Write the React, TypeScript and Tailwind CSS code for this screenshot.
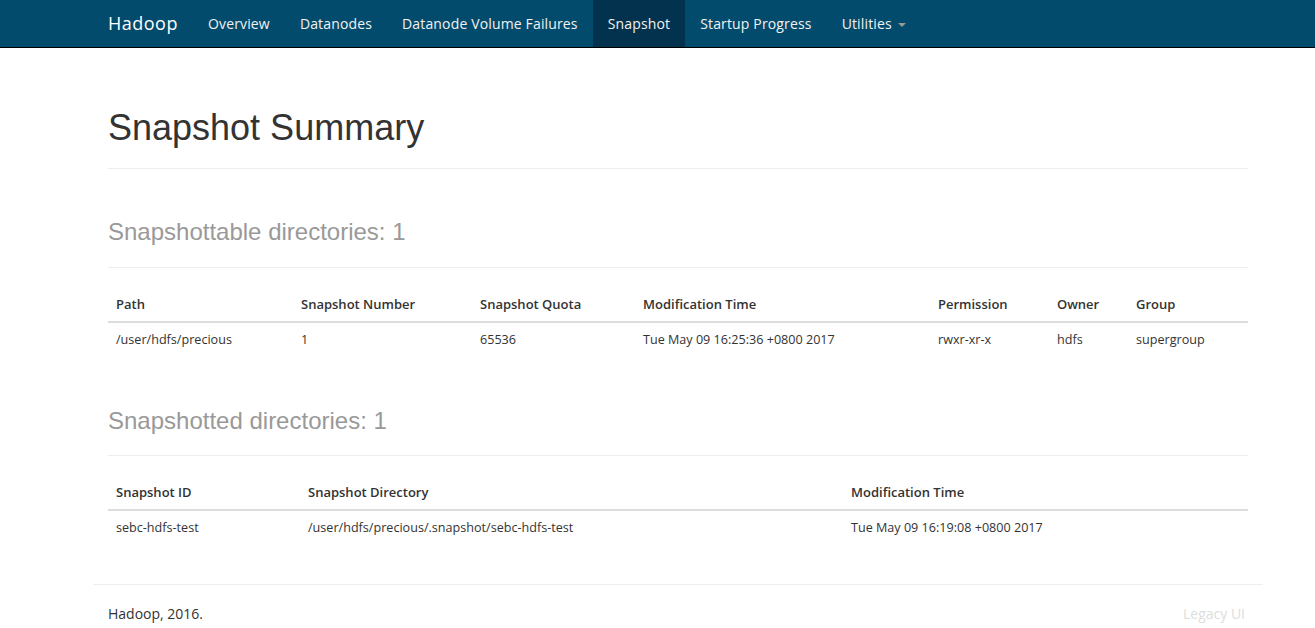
import { Fragment } from 'react'

const sans = "font-['Open_Sans',sans-serif]"
const head = "font-['Liberation_Sans',Arial,sans-serif]"

const navItems = ['Overview', 'Datanodes', 'Datanode Volume Failures', 'Snapshot', 'Startup Progress']

function Navbar() {
  return (
    <div className={`h-[48px] bg-[#034b6d] border-b border-black ${sans}`}>
      <div className="w-[1170px] ml-[93px] flex h-full">
        <div className="px-[15px] flex items-center text-[18px] text-white tracking-[0.5px]">Hadoop</div>
        {navItems.map((n) => (
          <div key={n}
            className={`px-[15px] flex items-center text-[14px] tracking-[0.15px] text-[#f2f2f2] ${n === 'Snapshot' ? 'bg-[#02324d]' : ''}`}>
            {n}
          </div>
        ))}
        <div className="px-[15px] flex items-center text-[14px] tracking-[0.15px] text-[#f2f2f2] gap-[6px]">
          Utilities
          <span className="w-0 h-0 border-x-[4px] border-x-transparent border-t-[4px] border-t-[#999] mt-[2px]" />
        </div>
      </div>
    </div>
  )
}

type Col = { label: string; w: string }

function DataTable({ cols, rows }: { cols: Col[]; rows: string[][] }) {
  return (
    <table className={`w-full border-collapse table-fixed text-[12.6px] text-[#333] ${sans}`}>
      <colgroup>
        {cols.map((c) => <col key={c.label} className={c.w} />)}
      </colgroup>
      <thead>
        <tr className="border-b-2 border-[#ddd]">
          {cols.map((c) => (
            <th key={c.label} className="text-left font-semibold text-[13px] px-[8px] pt-[8px] pb-[7px] leading-[19px]">{c.label}</th>
          ))}
        </tr>
      </thead>
      <tbody>
        {rows.map((r, i) => (
          <tr key={i}>
            {r.map((v, j) => (
              <td key={j} className="px-[8px] pt-[7px] pb-[9px] leading-[19px] whitespace-nowrap">{v}</td>
            ))}
          </tr>
        ))}
      </tbody>
    </table>
  )
}

export default function App() {
  return (
    <div className="bg-white min-h-[628px]">
      <Navbar />
      <div className="w-[1140px] ml-[108px]">
        <h1 className={`${head} text-[36px] leading-[40px] text-[#333] pt-[60px] pb-[20px] border-b border-[#eee]`}>
          Snapshot Summary
        </h1>
        <Fragment>
          <h3 className={`${head} text-[24px] leading-[26px] text-[#999] mt-[50px] pb-[22px] border-b border-[#eee]`}>
            Snapshottable directories: 1
          </h3>
          <div className="mt-[19px]">
            <DataTable
              cols={[
                { label: 'Path', w: 'w-[185px]' },
                { label: 'Snapshot Number', w: 'w-[179px]' },
                { label: 'Snapshot Quota', w: 'w-[163px]' },
                { label: 'Modification Time', w: 'w-[295px]' },
                { label: 'Permission', w: 'w-[119px]' },
                { label: 'Owner', w: 'w-[79px]' },
                { label: 'Group', w: 'w-[120px]' },
              ]}
              rows={[['/user/hdfs/precious', '1', '65536', 'Tue May 09 16:25:36 +0800 2017', 'rwxr-xr-x', 'hdfs', 'supergroup']]}
            />
          </div>
        </Fragment>
        <h3 className={`${head} text-[24px] leading-[26px] text-[#999] mt-[50px] pb-[21px] border-b border-[#eee]`}>
          Snapshotted directories: 1
        </h3>
        <div className="mt-[19px]">
          <DataTable
            cols={[
              { label: 'Snapshot ID', w: 'w-[192px]' },
              { label: 'Snapshot Directory', w: 'w-[543px]' },
              { label: 'Modification Time', w: 'w-[405px]' },
            ]}
            rows={[['sebc-hdfs-test', '/user/hdfs/precious/.snapshot/sebc-hdfs-test', 'Tue May 09 16:19:08 +0800 2017']]}
          />
        </div>
      </div>
      <div className="w-[1170px] ml-[93px] mt-[38px] border-t border-[#eee]">
        <div className={`flex justify-between px-[15px] pt-[19px] text-[14px] leading-[20px] ${sans}`}>
          <span className="text-[#333]">Hadoop, 2016.</span>
          <span className="text-[#ddd] mr-[3px]">Legacy UI</span>
        </div>
      </div>
    </div>
  )
}
